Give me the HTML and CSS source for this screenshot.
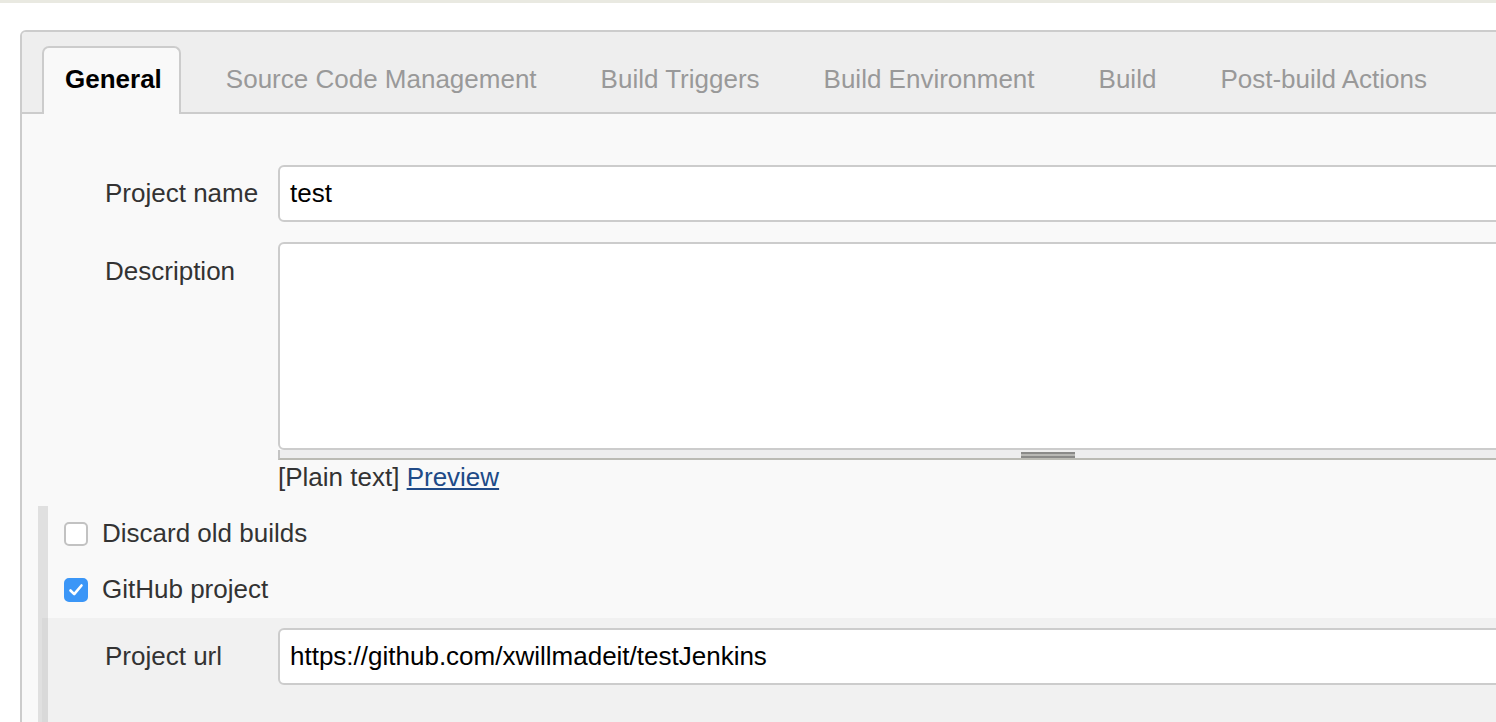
FILE: index.html
```html
<!DOCTYPE html>
<html>
<head>
<meta charset="utf-8">
<link rel="stylesheet" href="styles.css">
</head>
<body>
<div class="topline"></div>
<div class="panel">
  <div class="tabbar">
    <ul class="tabs">
      <li class="tab active">General</li>
      <li class="tab">Source Code Management</li>
      <li class="tab">Build Triggers</li>
      <li class="tab">Build Environment</li>
      <li class="tab">Build</li>
      <li class="tab">Post-build Actions</li>
    </ul>
  </div>
  <div class="content">
    <div class="row">
      <div class="label">Project name</div>
      <div class="field"><div class="input">test</div></div>
    </div>
    <div class="row desc-row">
      <div class="label label-top">Description</div>
      <div class="field">
        <div class="textarea"></div>
        <div class="grippie"><div class="grip"></div></div>
        <div class="hint">[Plain text] <a class="link" href="#">Preview</a></div>
      </div>
    </div>
    <div class="section">
      <div class="cb-row">
        <span class="checkbox"></span>
        <span class="cb-label">Discard old builds</span>
      </div>
      <div class="cb-row">
        <span class="checkbox checked">
          <svg width="24" height="24" viewBox="0 0 24 24"><path d="M6.5 12.5 L10.2 16.2 L17.5 7.5" fill="none" stroke="#fff" stroke-width="2.6" stroke-linecap="round" stroke-linejoin="round"/></svg>
        </span>
        <span class="cb-label">GitHub project</span>
      </div>
      <div class="nested">
        <div class="row nested-row">
          <div class="label nested-label">Project url</div>
          <div class="field"><div class="input">https://github.com/xwillmadeit/testJenkins</div></div>
        </div>
      </div>
    </div>
  </div>
</div>
</body>
</html>
```
FILE: styles.css
```css
html, body {
  margin: 0;
  padding: 0;
  background: #fff;
  overflow: hidden;
  width: 1496px;
  height: 722px;
}
body {
  font-family: "Liberation Sans", Arial, Helvetica, sans-serif;
  font-size: 26px;
  color: #333;
}
.topline {
  height: 3px;
  background: #e9e9e1;
}
.panel {
  margin: 27px 0 0 20px;
  width: 1840px;
  border: 2px solid #cccccc;
  border-radius: 6px;
  background: #f9f9f9;
}
.tabbar {
  height: 80px;
  background: #eeeeee;
  border-bottom: 2px solid #cccccc;
  border-radius: 4px 4px 0 0;
}
.tabs {
  display: flex;
  list-style: none;
  margin: 0;
  padding: 14px 0 0 20px;
}
.tab {
  box-sizing: border-box;
  height: 68px;
  padding: 16px 17px 0 21px;
  margin-right: 22px;
  line-height: 30px;
  border: 2px solid transparent;
  border-bottom: none;
  color: #999999;
  white-space: nowrap;
}
.tab.active {
  background: #f9f9f9;
  border-color: #cccccc;
  border-radius: 7px 7px 0 0;
  color: #000;
  font-weight: bold;
}
.content {
  padding-top: 51px;
}
.row {
  display: flex;
  align-items: center;
}
.label {
  box-sizing: border-box;
  width: 256px;
  padding-left: 83px;
  flex: none;
  white-space: nowrap;
}
.label-top {
  align-self: flex-start;
  padding-top: 14px;
}
.field {
  flex: none;
}
.input {
  box-sizing: border-box;
  width: 1538px;
  height: 57px;
  border: 2px solid #cccccc;
  border-radius: 6px;
  background: #fff;
  padding-left: 10px;
  line-height: 53px;
  color: #000;
}
.desc-row {
  margin-top: 20px;
}
.textarea {
  box-sizing: border-box;
  width: 1538px;
  height: 208px;
  border: 2px solid #cccccc;
  border-radius: 6px;
  background: #fff;
}
.grippie {
  box-sizing: border-box;
  width: 1538px;
  height: 10px;
  background: #eeeeee;
  border-left: 2px solid #c4c4c4;
  border-bottom: 2px solid #bbbbb4;
  padding-top: 2px;
}
.grip {
  box-sizing: border-box;
  width: 54px;
  height: 6px;
  margin: 0 auto;
  border-top: 2px solid #8a8a88;
  border-bottom: 2px solid #8a8a88;
  background: #b8b8b4;
}
.hint {
  margin-top: 2px;
  line-height: 30px;
}
.link {
  color: #204a87;
  text-decoration: underline;
}
.section {
  margin: 14px 0 0 16px;
  border-left: 10px solid #e0e0e0;
}
.cb-row {
  display: flex;
  align-items: center;
  height: 56px;
  padding-left: 16px;
}
.cb-row:first-child {
  height: 55px;
}
.cb-row:nth-child(2) {
  height: 57px;
}
.checkbox {
  box-sizing: border-box;
  width: 24px;
  height: 24px;
  border: 2px solid #c2c2c2;
  border-radius: 5px;
  background: #fff;
  margin-right: 14px;
  display: flex;
  align-items: center;
  justify-content: center;
  flex: none;
}
.checkbox.checked {
  background: #3b96f7;
  border-color: #3b96f7;
}
.checkbox svg {
  display: block;
  flex: none;
}
.cb-label {
  white-space: nowrap;
}
.nested {
  margin-left: -6px;
  background: rgba(0, 0, 0, 0.03);
  padding: 10px 0 40px 0;
}
.nested-label {
  width: 236px;
  padding-left: 63px;
}
```
